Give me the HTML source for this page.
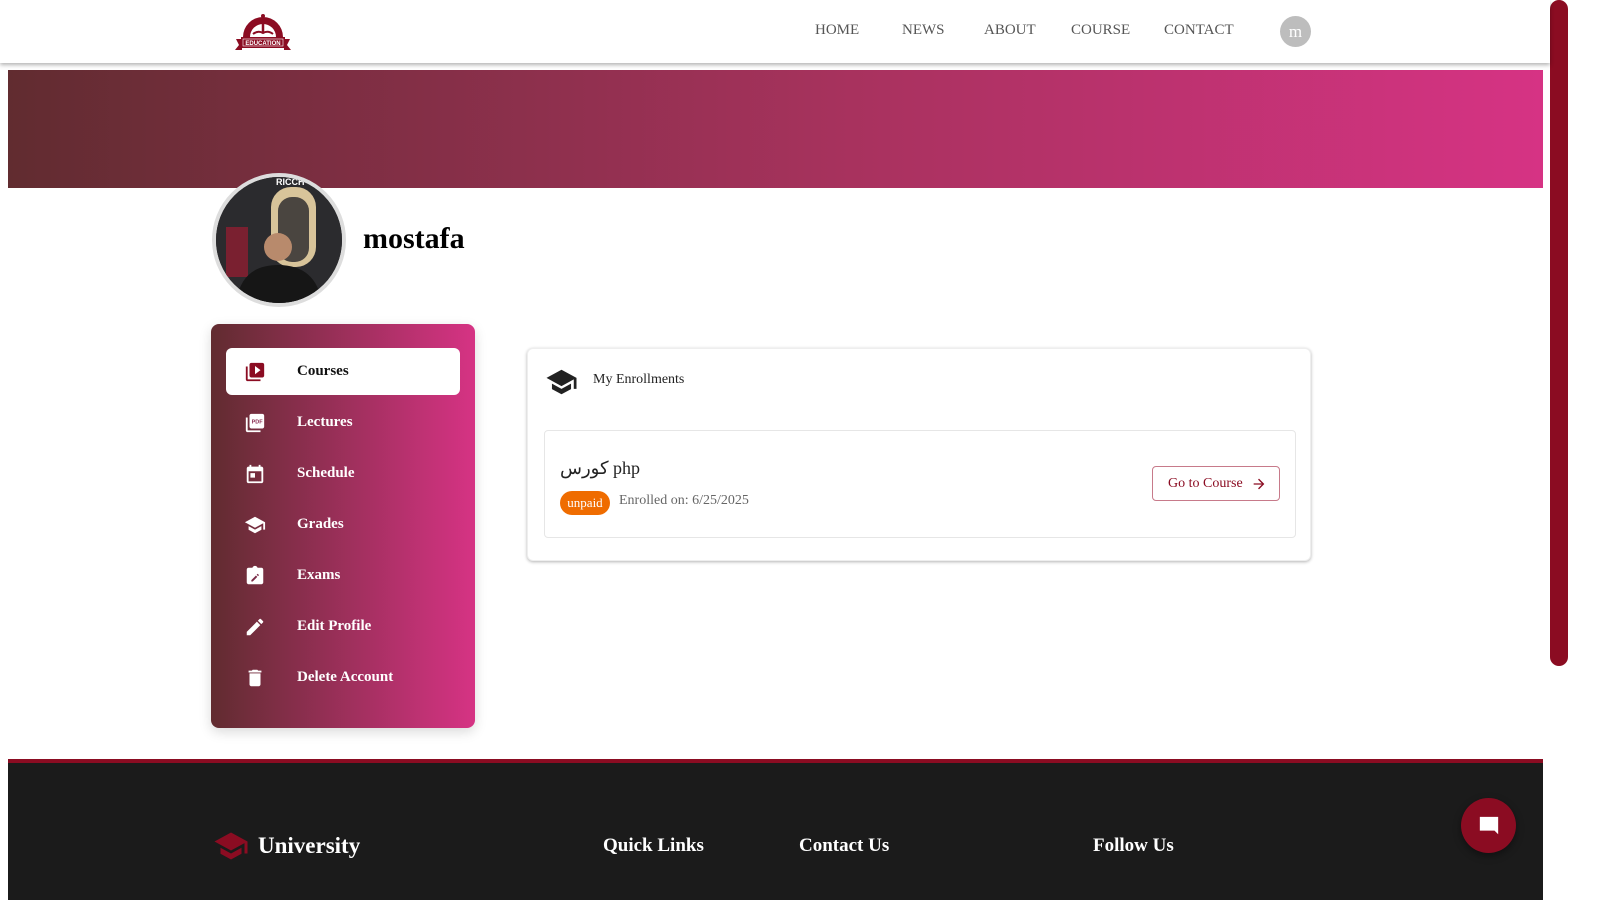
<!DOCTYPE html>
<html><head><meta charset="utf-8">
<style>
*{box-sizing:border-box;margin:0;padding:0}
body{width:1600px;height:900px;overflow:hidden;background:#fff;font-family:"Liberation Serif","Noto Serif CJK SC",serif;position:relative}
.abs{position:absolute}
.hdr{left:0;top:0;width:1550px;height:63px;background:#fff;box-shadow:0 2px 4px rgba(0,0,0,.3);z-index:2}
.nav{top:22px;font-size:15px;color:#555}
.banner{left:8px;top:70px;width:1535px;height:118px;background:linear-gradient(90deg,#612c30,#a8325e 55%,#d63384)}
.avatar{left:212px;top:173px;width:134px;height:134px;border-radius:50%;border:4px solid #ddd;overflow:hidden;background:#222}
.side{left:211px;top:324px;width:264px;height:404px;border-radius:8px;background:linear-gradient(90deg,#612c30,#d63384);box-shadow:0 4px 12px rgba(0,0,0,.15)}
.item{position:absolute;left:15px;width:234px;height:47px;color:#fff;font-weight:bold;font-size:15px;line-height:47px}
.item span{position:absolute;left:71px}
.item svg{position:absolute;left:18px;top:13px}
.item.act{background:#fff;border-radius:6px;color:#111}
.card{left:527px;top:348px;width:784px;height:213px;border-radius:6px;box-shadow:0 1px 3px rgba(0,0,0,.3);border:1px solid #eee;background:#fff}
.inner{left:16px;top:81px;width:752px;height:108px;border:1px solid #e6e6e6;border-radius:4px}
.footer{left:8px;top:759px;width:1535px;height:141px;background:#1b1b1b;border-top:4px solid #8b0c22}
.fh{color:#fff;font-weight:bold;font-size:19px;top:72px}
</style></head><body>
<div class="abs hdr">
  <svg class="abs" style="left:234px;top:5px" width="58" height="46" viewBox="0 0 58 46">
    <path d="M9 32 A20 20 0 0 1 49 32 L42 32 A13 13 0 0 0 16 32Z" fill="#8b0c22"/>
    <path d="M29 11 L29 27" stroke="#8b0c22" stroke-width="2.5"/>
    <circle cx="29" cy="11" r="2" fill="#8b0c22"/>
    <path d="M19 29 Q24 25 29 28 Q34 25 39 29" stroke="#8b0c22" stroke-width="2" fill="none"/>
    <path d="M2 34 L8 34 L8 45 L1 45 L5 40Z M56 34 L50 34 L50 45 L57 45 L53 40Z" fill="#8b0c22"/>
    <rect x="7" y="32" width="44" height="11" fill="#8b0c22"/>
    <rect x="9" y="34" width="40" height="7" fill="none" stroke="#fff" stroke-width=".6"/>
    <text x="29" y="40" font-family="Liberation Sans" font-size="6" font-weight="bold" fill="#fff" text-anchor="middle">EDUCATION</text>
  </svg>
  <div class="abs nav" style="left:815px">HOME</div>
  <div class="abs nav" style="left:902px">NEWS</div>
  <div class="abs nav" style="left:984px">ABOUT</div>
  <div class="abs nav" style="left:1071px">COURSE</div>
  <div class="abs nav" style="left:1164px">CONTACT</div>
  <div class="abs" style="left:1280px;top:16px;width:31px;height:31px;border-radius:50%;background:#bdbdbd;color:#fff;font-size:17px;text-align:center;line-height:31px">m</div>
</div>
<div class="abs" style="left:1550px;top:0;width:18px;height:666px;border-radius:9px;background:#8b0c22"></div>
<div class="abs banner"></div>
<div class="abs avatar">
  <svg width="126" height="126" viewBox="0 0 126 126"><rect width="126" height="126" fill="#2b2b2e"/><rect x="55" y="10" width="45" height="80" rx="20" fill="#d8c49a"/><rect x="62" y="20" width="31" height="65" rx="14" fill="#4a4540"/><rect x="10" y="50" width="22" height="50" fill="#7a2030"/><circle cx="62" cy="70" r="14" fill="#b88a6c"/><path d="M20 126 Q25 88 62 88 Q100 88 106 126Z" fill="#161616"/><text x="60" y="8" font-size="9" fill="#fff" font-family="Liberation Sans" font-weight="bold">RICCH</text></svg>
</div>
<div class="abs" style="left:363px;top:222px;font-size:30px;font-weight:bold;color:#000">mostafa</div>

<div class="abs side">
  <div class="item act" style="top:24px"><svg width="22" height="22" viewBox="0 0 24 24" fill="#8b0c22"><path d="M4 6H2v14c0 1.1.9 2 2 2h14v-2H4V6zm16-4H8c-1.1 0-2 .9-2 2v12c0 1.1.9 2 2 2h12c1.1 0 2-.9 2-2V4c0-1.1-.9-2-2-2zm-8 12.5v-9l6 4.5-6 4.5z"/></svg><span>Courses</span></div>
  <div class="item" style="top:75px"><svg width="22" height="22" viewBox="0 0 24 24" fill="#fff"><path d="M20 2H8c-1.1 0-2 .9-2 2v12c0 1.1.9 2 2 2h12c1.1 0 2-.9 2-2V4c0-1.1-.9-2-2-2zM4 6H2v14c0 1.1.9 2 2 2h14v-2H4V6z"/><text x="8.3" y="12.5" font-size="6" font-family="Liberation Sans" font-weight="bold" fill="#8a2c50">PDF</text></svg><span>Lectures</span></div>
  <div class="item" style="top:126px"><svg width="22" height="22" viewBox="0 0 24 24" fill="#fff"><path d="M19 4h-1V2h-2v2H8V2H6v2H5c-1.1 0-2 .9-2 2v14c0 1.1.9 2 2 2h14c1.1 0 2-.9 2-2V6c0-1.1-.9-2-2-2zm0 16H5V9h14v11zM7 11h5v5H7z"/></svg><span>Schedule</span></div>
  <div class="item" style="top:177px"><svg width="22" height="22" viewBox="0 0 24 24" fill="#fff"><path d="M5 13.18v4L12 21l7-3.82v-4L12 17l-7-3.82zM12 3 1 9l11 6 9-4.91V17h2V9L12 3z"/></svg><span>Grades</span></div>
  <div class="item" style="top:228px"><svg width="22" height="22" viewBox="0 0 24 24" fill="#fff"><path d="M19 3h-4.18C14.4 1.84 13.3 1 12 1s-2.4.84-2.82 2H5c-1.1 0-2 .9-2 2v14c0 1.1.9 2 2 2h14c1.1 0 2-.9 2-2V5c0-1.1-.9-2-2-2z"/><path d="M8 16.5V18h1.5l5-5L13 11.5z M15.3 12.2l1.1-1.1-1.5-1.5-1.1 1.1z" fill="#7a2c48"/></svg><span>Exams</span></div>
  <div class="item" style="top:279px"><svg width="22" height="22" viewBox="0 0 24 24" fill="#fff"><path d="M3 17.25V21h3.75L17.81 9.94l-3.75-3.75L3 17.25zM20.71 7.04a1 1 0 0 0 0-1.41l-2.34-2.34a1 1 0 0 0-1.41 0l-1.83 1.83 3.75 3.75 1.83-1.83z"/></svg><span>Edit Profile</span></div>
  <div class="item" style="top:330px"><svg width="22" height="22" viewBox="0 0 24 24" fill="#fff"><path d="M6 19c0 1.1.9 2 2 2h8c1.1 0 2-.9 2-2V7H6v12zM19 4h-3.5l-1-1h-5l-1 1H5v2h14V4z"/></svg><span>Delete Account</span></div>
</div>

<div class="abs card">
  <svg class="abs" style="left:17px;top:18px" width="33" height="30" viewBox="0 0 24 22" fill="#222"><path d="M5 12.18v4L12 20l7-3.82v-4L12 16l-7-3.82zM12 2 1 8l11 6 9-4.91V16h2V8L12 2z"/></svg>
  <div class="abs" style="left:65px;top:23px;font-size:14px;color:#222">My Enrollments</div>
  <div class="abs inner">
    <div class="abs" style="left:15px;top:27px;font-size:18px;color:#222">كورس php</div>
    <div class="abs" style="left:15px;top:60px;width:50px;height:24px;border-radius:12px;background:#ef6c00;color:#fff;font-size:13px;text-align:center;line-height:23px">unpaid</div>
    <div class="abs" style="left:74px;top:62px;font-size:14px;color:#666">Enrolled on: 6/25/2025</div>
    <div class="abs" style="left:607px;top:35px;width:128px;height:35px;border:1px solid #c77a8a;border-radius:4px;color:#8b0c22;font-size:14px;line-height:33px;padding-left:15px">Go to Course
      <svg class="abs" style="left:98px;top:9px" width="16" height="16" viewBox="0 0 24 24" fill="#8b0c22"><path d="M12 4l-1.41 1.41L16.17 11H4v2h12.17l-5.58 5.59L12 20l8-8z"/></svg></div>
  </div>
</div>

<div class="abs footer">
  <svg class="abs" style="left:205px;top:68px" width="36" height="30" viewBox="0 0 24 20" fill="#8b0c22"><path d="M5 11.18v4L12 19l7-3.82v-4L12 15l-7-3.82zM12 1 1 7l11 6 9-4.91V15h2V7L12 1z"/></svg>
  <div class="abs fh" style="left:250px;top:70px;font-size:23px">University</div>
  <div class="abs fh" style="left:595px">Quick Links</div>
  <div class="abs fh" style="left:791px">Contact Us</div>
  <div class="abs fh" style="left:1085px">Follow Us</div>
</div>
<div class="abs" style="left:1461px;top:798px;width:55px;height:55px;border-radius:50%;background:#8b0c22;box-shadow:0 3px 8px rgba(0,0,0,.4)">
  <svg class="abs" style="left:17px;top:17px" width="22" height="22" viewBox="0 0 24 24" fill="#fff"><path d="M2 2h20v15H6l-4 4z" transform="scale(-1,1) translate(-24,0)"/></svg>
</div>
</body></html>
